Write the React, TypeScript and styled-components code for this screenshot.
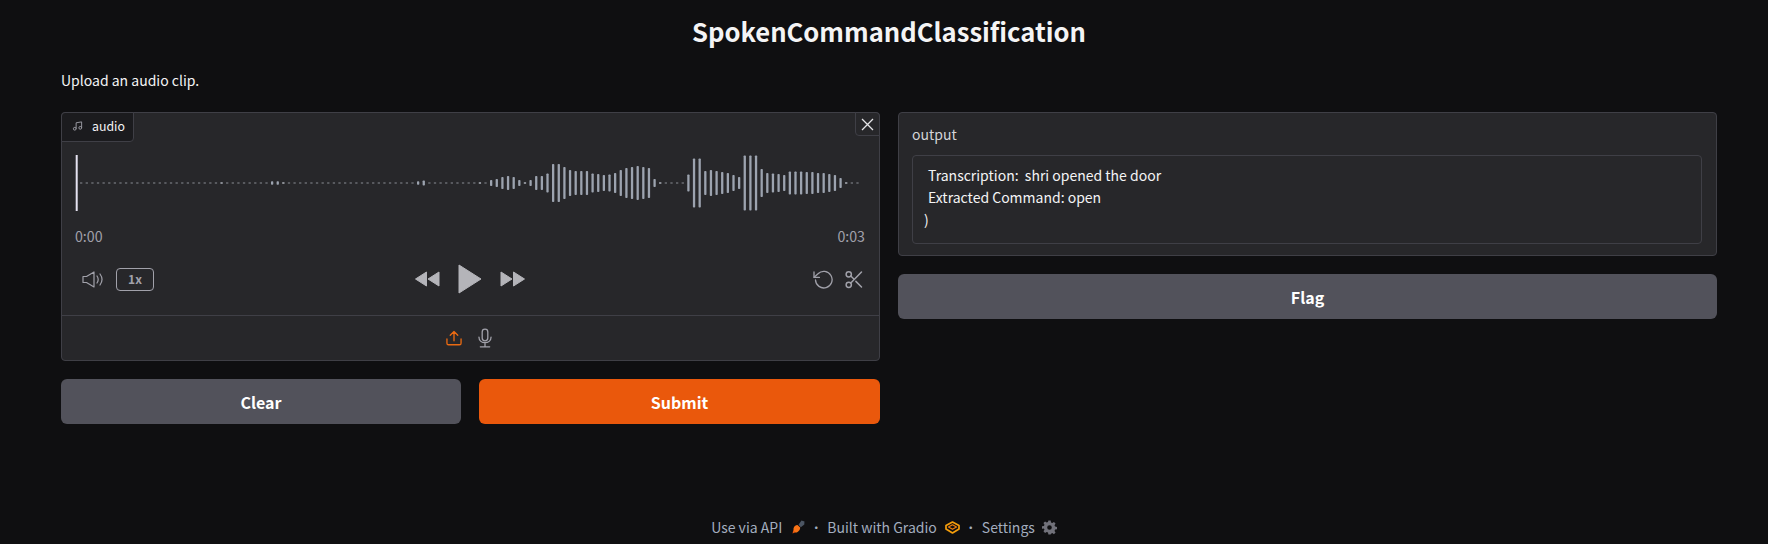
import React from "react";
import styled, { createGlobalStyle } from "styled-components";

const Global = createGlobalStyle`
  html, body { margin: 0; padding: 0; background: #0f0f11; }
  body { font-family: "Noto Sans CJK SC", "Noto Sans", sans-serif; color: #f4f4f5; }
  * { box-sizing: border-box; }
`;

const Page = styled.div`
  width: 1768px;
  height: 544px;
  padding: 0 51px 0 61px;
  display: flex;
  flex-direction: column;
  overflow: hidden;
`;
const Title = styled.h1`
  margin: 0;
  height: 62px;
  line-height: 62px;
  text-align: center;
  font-size: 25.6px;
  font-weight: 700;
  color: #f4f4f5;
`;
const Intro = styled.p`
  margin: 0;
  height: 36px;
  line-height: 36px;
  font-size: 14px;
  color: #f4f4f5;
`;
const Row = styled.div`
  margin-top: 14px;
  display: grid;
  grid-template-columns: 819px 819px;
  column-gap: 18px;
  align-items: start;
`;
const Column = styled.div`
  display: flex;
  flex-direction: column;
  gap: 18px;
`;
const Card = styled.section`
  position: relative;
  background: #27272a;
  border: 1px solid #3f3f46;
  border-radius: 4px;
`;
const TabLabel = styled.div`
  position: absolute;
  left: -1px;
  top: -1px;
  width: 73px;
  height: 30px;
  display: flex;
  align-items: center;
  gap: 9px;
  padding: 0 0 2px 10px;
  background: #1b1b1e;
  border: 1px solid #3f3f46;
  border-top-left-radius: 4px;
  border-bottom-right-radius: 4px;
  font-size: 12.3px;
  color: #f4f4f5;
`;
const CloseButton = styled.button`
  position: absolute;
  right: -1px;
  top: -1px;
  width: 25px;
  height: 24px;
  padding: 0;
  display: flex;
  align-items: center;
  justify-content: center;
  background: #27272a;
  border: 1px solid #3f3f46;
  border-top-right-radius: 4px;
  border-bottom-left-radius: 4px;
`;
const WaveWrap = styled.div`
  height: 111px;
  padding-top: 42px;
  display: flex;
`;
const Times = styled.div`
  height: 24px;
  padding: 0 14px 0 13px;
  display: flex;
  justify-content: space-between;
  align-items: center;
  font-size: 14.2px;
  color: #a1a1aa;
`;
const Controls = styled.div`
  height: 67px;
  padding: 0 16px 5px 20px;
  display: grid;
  grid-template-columns: 1fr auto 1fr;
  align-items: center;
`;
const LeftControls = styled.div`
  display: flex;
  align-items: center;
  gap: 12px;
`;
const CenterControls = styled.div`
  display: flex;
  align-items: center;
  gap: 18px;
  margin-left: -5px;
`;
const RightControls = styled.div`
  display: flex;
  align-items: center;
  justify-content: flex-end;
  gap: 12px;
`;
const Speed = styled.button`
  width: 38px;
  height: 23px;
  padding: 0 0 1px;
  background: transparent;
  border: 1px solid #a1a1aa;
  border-radius: 4px;
  font-family: inherit;
  font-size: 12px;
  font-weight: 600;
  color: #a1a1aa;
`;
const SourceBar = styled.div`
  height: 45px;
  padding-right: 3px;
  border-top: 1px solid #3f3f46;
  display: flex;
  align-items: center;
  justify-content: center;
  gap: 16px;
`;
const Buttons = styled.div`
  display: grid;
  grid-template-columns: 400px 401px;
  column-gap: 18px;
`;
const Action = styled.button<{ $primary?: boolean }>`
  height: 45px;
  width: 100%;
  border: 0;
  border-radius: 6px;
  background: ${(p) => (p.$primary ? "#ea580c" : "#52525b")};
  color: #fff;
  font-family: inherit;
  font-size: 16px;
  font-weight: 700;
`;
const OutputCard = styled(Card)`
  height: 144px;
  padding: 10px 14px 0 13px;
`;
const OutputLabel = styled.div`
  height: 28px;
  line-height: 22px;
  font-size: 14px;
  color: #d4d4d8;
`;
const OutputBox = styled.div`
  height: 89px;
  margin-top: 4px;
  padding: 8px 12px 8px 15px;
  border: 1px solid #3f3f46;
  border-radius: 4px;
  font-size: 14px;
  line-height: 22px;
  color: #f4f4f5;
  white-space: pre;
`;
const CloseParen = styled.div`
  margin-left: -4px;
`;
const Footer = styled.footer`
  position: absolute;
  left: 0;
  top: 514px;
  width: 1768px;
  height: 26px;
  display: flex;
  align-items: center;
  justify-content: center;
  font-size: 14px;
  color: #a3adbf;
`;
const FooterDot = styled.span`
  margin: 0 5px;
  font-size: 12px;
`;
const FooterIcon = styled.span<{ $gap: number }>`
  margin-left: ${(p) => p.$gap}px;
  display: inline-flex;
`;

const body = [6,8,12,14,12,6,2,6,14,14,19,38,38,32,26,24,24,24,19,18,16,17,20,26,30,32,34,32,30,8,2,1,1,1,1,17,49,49,24,26,24,22,20,16,12,55,55,55,28,20,19,18,16,23,23,23,22,22,20,20,18,16,10,2,1,1];
const extra: Record<number, number> = { 25: 2, 34: 3.5, 35: 3.5, 36: 2, 60: 3.5, 61: 5, 71: 2 };

function Waveform() {
  const bars: React.ReactNode[] = [];
  for (let i = 0; i < 73 + body.length; i++) {
    const step = i < 73 ? 5.616 : 5.636;
    const x = 490 + step * (i - 73) - 62;
    const h = i >= 73 ? body[i - 73] : extra[i] ?? 1;
    bars.push(
      <rect key={i} x={x} y={28 - h / 2} width={2.3} height={h} fill={h <= 2 ? "#8a8d94" : "#9ca3af"} rx={h <= 2 ? 0 : 0.8} />
    );
  }
  return (
    <svg width="817" height="57" viewBox="0 0 817 57" style={{ display: "block" }}>
      <rect x="13.7" y="0" width="2" height="56" fill="#e4e2f0" />
      {bars}
    </svg>
  );
}

const stroke = { fill: "none", stroke: "#a1a1aa", strokeLinecap: "round", strokeLinejoin: "round" } as const;

export default function App() {
  return (
    <>
      <Global />
      <Page>
        <Title>SpokenCommandClassification</Title>
        <Intro>Upload an audio clip.</Intro>
        <Row>
          <Column>
            <Card>
              <TabLabel>
                <svg width="11" height="12" viewBox="0 0 24 24" fill="none" stroke="#a1a1aa" strokeWidth="2">
                  <path d="M9 18V5l12-2v13" />
                  <circle cx="6" cy="18" r="3" />
                  <circle cx="18" cy="16" r="3" />
                </svg>
                audio
              </TabLabel>
              <CloseButton aria-label="Clear">
                <svg width="13" height="13" viewBox="0 0 13 13" fill="none" stroke="#e4e4e7" strokeWidth="1.3">
                  <path d="M1 1l11 11M12 1L1 12" />
                </svg>
              </CloseButton>
              <WaveWrap>
                <Waveform />
              </WaveWrap>
              <Times>
                <span>0:00</span>
                <span>0:03</span>
              </Times>
              <Controls>
                <LeftControls>
                  <svg width="22" height="17" viewBox="0 0 22 17" {...stroke} strokeWidth={1.2}>
                    <path d="M1 5.500h3.500L12 1v15L4.500 11.500H1z" />
                    <path d="M15 5c1.500 2.200 1.500 4.800 0 7M18 3c2.500 3.400 2.500 7.600 0 11" />
                  </svg>
                  <Speed>1x</Speed>
                </LeftControls>
                <CenterControls>
                  <svg width="25" height="16" viewBox="0 0 25 16" fill="#b4b4b9">
                    <path d="M0.500 8L11.500 1v14zM13 8L24 1v14z" stroke="#b4b4b9" strokeLinejoin="round" />
                  </svg>
                  <svg width="24" height="30" viewBox="0 0 24 30" fill="#b4b4b9">
                    <path d="M1 1l22 14L1 29z" stroke="#b4b4b9" strokeLinejoin="round" />
                  </svg>
                  <svg width="25" height="16" viewBox="0 0 25 16" fill="#b4b4b9">
                    <path d="M1 1l11 7L1 15zM13.500 1l11 7-11 7z" stroke="#b4b4b9" strokeLinejoin="round" />
                  </svg>
                </CenterControls>
                <RightControls>
                  <svg width="20" height="19" viewBox="0 0 20 19" {...stroke} strokeWidth={1.3}>
                    <path d="M2.500 10a8.300 8.300 0 1 0 2.500-6.300L1.200 7.200" />
                    <path d="M1 2v5.400h5.400" />
                  </svg>
                  <svg width="18" height="19" viewBox="0 0 24 24" {...stroke} strokeWidth={2}>
                    <circle cx="5" cy="5" r="3.500" />
                    <circle cx="5" cy="19" r="3.500" />
                    <path d="M22 2L7.700 16.600M14.500 14.500L22 22M7.700 7.400L11.500 11" />
                  </svg>
                </RightControls>
              </Controls>
              <SourceBar>
                <svg width="16" height="16" viewBox="0 0 17 17" fill="none" stroke="#ea6a12" strokeWidth="1.4" strokeLinecap="round" strokeLinejoin="round">
                  <path d="M1 9.500v4.500a1.700 1.700 0 0 0 1.700 1.700h11.600a1.700 1.700 0 0 0 1.700-1.700v-4.500" />
                  <path d="M8.500 11.500V1.500M4.500 5.500l4-4 4 4" />
                </svg>
                <svg width="14" height="20" viewBox="0 0 15 21" {...stroke} strokeWidth={1.4}>
                  <rect x="4.500" y="1" width="6" height="12.500" rx="3" />
                  <path d="M1 9.500c0 8 13 8 13 0M7.500 16.500V20M2.500 20h10" />
                </svg>
              </SourceBar>
            </Card>
            <Buttons>
              <Action>Clear</Action>
              <Action $primary>Submit</Action>
            </Buttons>
          </Column>
          <Column>
            <OutputCard>
              <OutputLabel>output</OutputLabel>
              <OutputBox>
                {"Transcription:  shri opened the door\nExtracted Command: open"}
                <CloseParen>)</CloseParen>
              </OutputBox>
            </OutputCard>
            <Action>Flag</Action>
          </Column>
        </Row>
        <Footer>
          Use via API
          <FooterIcon $gap={10}>
            <svg width="13" height="14" viewBox="0 0 13 14">
              <path d="M0.500 13.500l.8-3.500 2.400 2.200z" fill="#ea580c" />
              <path d="M1.500 8.500C2 6.500 3.500 5 5.500 5l2.700 2.500c0 2-1.200 3.800-3 4.700-2 .9-4.200-.8-3.700-3.700z" fill="#f97316" />
              <path d="M6.500 4.800L9.500.6l3 .9-.2 3L8.800 7.200z" fill="#4b5563" />
            </svg>
          </FooterIcon>
          <FooterDot>·</FooterDot>
          Built with Gradio
          <FooterIcon $gap={8}>
            <svg width="15" height="13" viewBox="0 0 15 13" fill="none" strokeLinejoin="round">
              <path d="M7.500 1L14 4.500v3.500L7.500 12 1 8V4.500z" stroke="#f59e0b" strokeWidth="1.7" />
              <path d="M3.500 6L7.500 3.800 11.500 6 7.500 8.300z" stroke="#ea7c0c" strokeWidth="1.3" />
            </svg>
          </FooterIcon>
          <FooterDot>·</FooterDot>
          Settings
          <FooterIcon $gap={7}>
            <svg width="15" height="15" viewBox="-1 -1 26 26" fill="#71717a">
              <path fillRule="evenodd" d="M10 0h4l.6 3.200 2.300 1 2.800-1.800 2.800 2.800-1.800 2.800 1 2.300 3.300.7v4l-3.300.6-1 2.300 1.800 2.800-2.800 2.800-2.800-1.800-2.300 1L14 24h-4l-.6-3.300-2.300-1-2.800 1.800-2.800-2.800 1.800-2.800-1-2.300L-1 14v-4l3.300-.6 1-2.300-1.800-2.800 2.800-2.800 2.800 1.800 2.300-1zM12 8a4 4 0 1 0 0 8 4 4 0 0 0 0-8z" />
            </svg>
          </FooterIcon>
        </Footer>
      </Page>
    </>
  );
}
